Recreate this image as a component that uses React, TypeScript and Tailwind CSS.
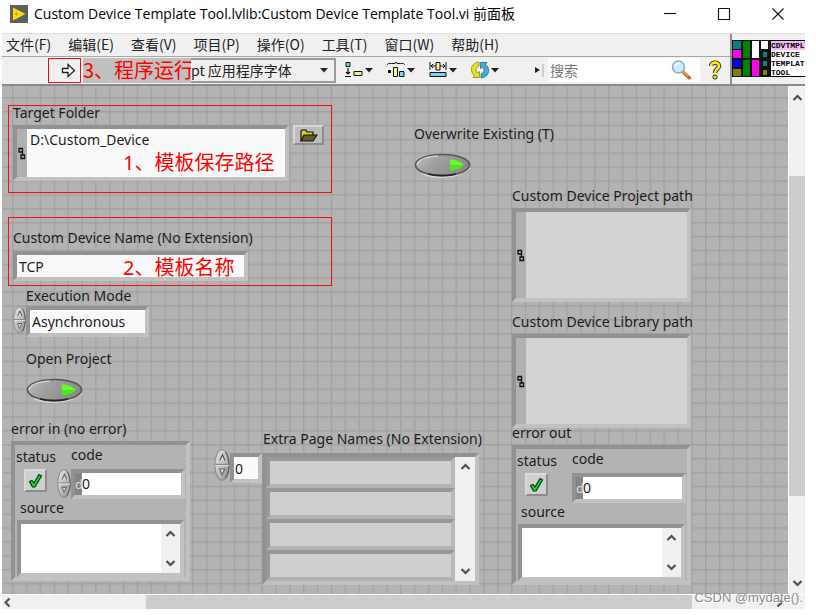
import type { ReactNode } from "react";

const LATIN = "font-['Noto_Sans','Noto_Sans_CJK_SC',sans-serif]";
const TITLE = "font-['Open_Sans','Noto_Sans_CJK_SC',sans-serif]";
const CJK = "font-['Noto_Sans_CJK_SC',sans-serif]";
const BEVEL =
  "border-4 border-t-[#929292] border-l-[#929292] border-r-[#c1c1c1] border-b-[#c1c1c1]";

const MENUS = ["文件(F)", "编辑(E)", "查看(V)", "项目(P)", "操作(O)", "工具(T)", "窗口(W)", "帮助(H)"];

function GridLines() {
  return (
    <svg className="absolute inset-0 size-full" aria-hidden="true">
      <defs>
        <pattern id="grid" x="10" y="11" width="13.86" height="13.88" patternUnits="userSpaceOnUse">
          <path d="M0.7 0V13.88M0 0.7H13.86" stroke="#a2a2a2" strokeWidth="1.4" />
        </pattern>
      </defs>
      <rect width="100%" height="100%" fill="url(#grid)" />
    </svg>
  );
}

function PathGlyph() {
  return (
    <svg width="8" height="13" viewBox="0 0 8 13" fill="none" stroke="#111" aria-hidden="true">
      <path d="M1 1.500H4.500V5H1ZM4.500 5V8M3 8H6.500V11.500H3Z" strokeWidth="1.300" />
    </svg>
  );
}

function Chevron({ dir }: { dir: "up" | "down" | "left" | "right" }) {
  const d = {
    up: "M1.500 8L5.500 4L9.500 8",
    down: "M1.500 3L5.500 7L9.500 3",
    left: "M7.500 1.500L3.500 5.500L7.500 9.500",
    right: "M3.500 1.500L7.500 5.500L3.500 9.500",
  }[dir];
  return (
    <svg width="11" height="11" viewBox="0 0 11 11" fill="none" aria-hidden="true">
      <path d={d} stroke="#505050" strokeWidth="2.200" />
    </svg>
  );
}

function Spinner({ label, size }: { label: string; size: string }) {
  return (
    <span className={`relative flex shrink-0 flex-col ${size}`}>
      <svg className="absolute inset-0 size-full" viewBox="0 0 14 28" preserveAspectRatio="none" aria-hidden="true">
        <defs>
          <linearGradient id="knob" x1="0" y1="0" x2="1" y2="1">
            <stop offset="0" stopColor="#e8e8e8" />
            <stop offset="0.6" stopColor="#b8b8b8" />
            <stop offset="1" stopColor="#888" />
          </linearGradient>
        </defs>
        <ellipse cx="7" cy="14" rx="6.300" ry="13.300" fill="url(#knob)" stroke="#8c8c8c" strokeWidth="1" />
        <path d="M10 2.500C14 8 14 20 10 25.500" fill="none" stroke="#666" strokeWidth="1.200" />
        <path d="M1 13.500H13" stroke="#888" />
        <path d="M1 14.500H13" stroke="#ddd" />
        <path d="M5 10L7.500 5L9.500 10" fill="#ddd" stroke="#555" strokeWidth="1" />
        <path d="M9.500 17.500L7 22.500L5 17.500Z" fill="#ddd" stroke="#666" strokeWidth="1" />
      </svg>
      <button type="button" aria-label={`${label} increment`} className="relative flex-1" />
      <button type="button" aria-label={`${label} decrement`} className="relative flex-1" />
    </span>
  );
}

function Toggle({ label }: { label: string }) {
  return (
    <label className="flex w-fit flex-col gap-[9px] leading-5 whitespace-nowrap">
      {label}
      <span className="relative block h-[25px] w-[58px]">
        <input type="checkbox" defaultChecked className="absolute inset-0 size-full opacity-0" />
        <svg width="58" height="25" viewBox="0 0 58 25" aria-hidden="true">
          <defs>
            <linearGradient id="oval" x1="0" y1="0" x2="1" y2="0.400">
              <stop offset="0" stopColor="#c4c4c4" />
              <stop offset="0.400" stopColor="#a2a2a2" />
              <stop offset="1" stopColor="#8a8a8a" />
            </linearGradient>
          </defs>
          <ellipse cx="29" cy="12.500" rx="28.500" ry="12" fill="#a6a6a6" />
          <path d="M8 20C20 26 44 26 56 15" fill="none" stroke="#d2d2d2" strokeWidth="2" />
          <ellipse cx="28.500" cy="12" rx="27" ry="10.500" fill="url(#oval)" stroke="#555" strokeWidth="1.600" />
          <path d="M3 12C4 5 14 3.500 24 3" fill="none" stroke="#e0e0e0" strokeWidth="1.200" />
          <path d="M14 21C22 23 34 23 42 21" fill="none" stroke="#222" strokeWidth="1.800" />
          <path d="M36 6.500C42 6.500 47 9 50 12C47 15 42 17.500 36 17.500Z" fill="#4be81c" />
          <path d="M36 6.500C42 6.500 47 9 50 12H36Z" fill="#62fb2c" />
        </svg>
      </span>
    </label>
  );
}

function PathIndicator({ label, id }: { label: string; id: string }) {
  return (
    <div className="flex flex-col">
      <label htmlFor={id} className="leading-5 whitespace-nowrap">
        {label}
      </label>
      <div className={`mt-0.5 flex h-[94px] w-[179px] bg-[#b0b0b0] ${BEVEL}`}>
        <span className="flex w-2.5 items-center justify-center">
          <PathGlyph />
        </span>
        <textarea id={id} readOnly className="min-w-0 flex-1 resize-none bg-[#d2d2d2] outline-none" />
      </div>
    </div>
  );
}

function ScrollColumn({ size, name }: { size: string; name: string }) {
  return (
    <span className={`flex shrink-0 flex-col items-center justify-between bg-[#f0f0f0] py-1 ${size}`}>
      <button type="button" aria-label={`${name} scroll up`}>
        <Chevron dir="up" />
      </button>
      <button type="button" aria-label={`${name} scroll down`}>
        <Chevron dir="down" />
      </button>
    </span>
  );
}

function ErrorCluster({ title, id, editable }: { title: string; id: string; editable?: boolean }) {
  return (
    <fieldset className="flex w-[179px] flex-col">
      <legend className="leading-5 whitespace-nowrap">{title}</legend>
      <div className={`mt-0.5 flex h-[140px] flex-col bg-[#b3b3b3] ${BEVEL}`}>
        <div className="flex">
          <label className="flex w-[42px] flex-col pl-px leading-5">
            <span className="pt-0.5">status</span>
            <span className="relative mt-0.5 ml-2 flex size-[23px] items-center justify-center border-2 border-t-[#dadada] border-r-[#8c8c8c] border-b-[#8c8c8c] border-l-[#dadada] bg-[#cfcfcf]">
              <input type="checkbox" defaultChecked className="absolute inset-0 size-full opacity-0" />
              <svg width="15" height="16" viewBox="0 0 15 16" aria-hidden="true">
                <path d="M1.500 8.500L4 7.500L6 10L11 1.500L13.500 3L7 14H4.500Z" fill="#0be32b" stroke="#113311" strokeWidth="1.200" />
              </svg>
            </span>
          </label>
          <div className="flex flex-1 flex-col">
            <label htmlFor={`${id}-code`} className="pl-3.5 leading-5">
              code
            </label>
            <div className="mt-1 flex h-[29px] items-center">
              {editable ? <Spinner label={`${title} code`} size="h-[29px] w-3.5" /> : <span className="w-3.5" />}
              <div className={`flex h-[30px] w-[114px] bg-[#858585] ${BEVEL}`}>
                <span className="w-[7px] overflow-hidden text-[13px] leading-[22px] text-[#dcdcdc]">d</span>
                <input
                  id={`${id}-code`}
                  defaultValue="0"
                  readOnly={!editable}
                  className="min-w-0 flex-1 bg-white outline-none"
                />
              </div>
            </div>
          </div>
        </div>
        <label htmlFor={`${id}-source`} className="pl-[5px] leading-5">
          source
        </label>
        <div className={`mt-0.5 ml-0.5 flex h-[58px] w-[167px] bg-white ${BEVEL}`}>
          <textarea id={`${id}-source`} readOnly={!editable} className="min-w-0 flex-1 resize-none outline-none" />
          <ScrollColumn name={`${title} source`} size="w-[19px]" />
        </div>
      </div>
    </fieldset>
  );
}

function DropMark() {
  return (
    <svg width="8" height="5" viewBox="0 0 8 5" aria-hidden="true">
      <path d="M0 0H8L4 4.500Z" fill="#222" />
    </svg>
  );
}

function ToolButton({ label, children }: { label: string; children: ReactNode }) {
  return (
    <button type="button" aria-label={label} className="flex items-center gap-0.5">
      <svg width="18" height="18" viewBox="0 0 18 18" fill="none" aria-hidden="true">
        {children}
      </svg>
      <DropMark />
    </button>
  );
}

function TitleBar() {
  return (
    <header className="flex h-[33px] items-start bg-white pl-2">
      <div className="flex h-[27px] flex-1 items-center gap-1.5">
        <svg width="18" height="18" viewBox="0 0 18 18" aria-hidden="true">
          <rect width="18" height="18" fill="#5b5f66" />
          <path d="M3 2.500L15.500 9L3 15.500Z" fill="#fddb00" />
          <path d="M5 9H8M6.500 7.500V10.500" stroke="#b89a00" />
        </svg>
        <h1 className={`text-sm whitespace-nowrap text-black ${TITLE}`}>
          Custom Device Template Tool.lvlib:Custom Device Template Tool.vi 前面板
        </h1>
      </div>
      {[
        ["Minimize", "M1 6.500H13"],
        ["Maximize", "M1.500 1.500H12.500V12.500H1.500Z"],
        ["Close", "M1.500 1.500L12.500 12.500M12.500 1.500L1.500 12.500"],
      ].map(([name, d]) => (
        <button key={name} type="button" aria-label={name} className="flex h-[27px] w-[54px] items-center justify-center">
          <svg width="14" height="14" viewBox="0 0 14 14" fill="none" aria-hidden="true">
            <path d={d} stroke="#111" strokeWidth="1.100" />
          </svg>
        </button>
      ))}
    </header>
  );
}

function Toolbar() {
  return (
    <div className="flex h-7 items-center">
      <button
        type="button"
        aria-label="Run"
        className="ml-[46px] flex h-[25px] w-[33px] items-center justify-end border border-[#f01010] pr-1"
      >
        <svg width="15" height="15" viewBox="0 0 15 15" aria-hidden="true">
          <path d="M1.500 5.500H7V1.500L13.500 7.500L7 13.500V9.500H1.500Z" fill="#fff" stroke="#222" strokeWidth="1.300" />
        </svg>
      </button>
      <span className="ml-0.5 flex h-[25px] w-[108px] items-center bg-[#c0c0c0] text-xl leading-6 whitespace-nowrap text-[#f00]">
        3、程序运行
      </span>
      <span className="relative flex w-[145px] items-center">
        <select
          aria-label="应用程序字体"
          className="h-[25px] w-full appearance-none border-2 border-l-0 border-[#9a9a9a] bg-[#f0f0f0] text-sm text-[#222] outline-none"
        >
          <option>pt 应用程序字体</option>
        </select>
        <span className="pointer-events-none absolute right-2">
          <DropMark />
        </span>
      </span>
      <div className="ml-[9px] flex items-center gap-3.5">
        <ToolButton label="Align Objects">
          <path d="M1 1.500H5V5.500H1Z" fill="#6fd6f5" stroke="#111" />
          <path d="M3 7V13M1 11L3 13L5 11M0 15.500H6" stroke="#111" strokeWidth="1.200" />
          <path d="M9 10.500H17V14.500H9Z" fill="#f7f27c" stroke="#111" />
        </ToolButton>
        <ToolButton label="Distribute Objects">
          <path d="M0 4C1 2 2 2.500 8 2.500L9 1L10 2.500C16 2.500 17 2 18 4" stroke="#111" />
          <path d="M1 9H4V12H1Z" fill="#111" />
          <path d="M6.500 6.500H10.500V15.500H6.500Z" fill="#f7f27c" stroke="#111" />
          <path d="M12.500 10.500H17V15.500H12.500Z" fill="#6fd6f5" stroke="#111" />
        </ToolButton>
        <ToolButton label="Resize Objects">
          <path d="M1 1V9M17 1V9M2 5H7M11 5H16M4 3L2 5L4 7M14 3L16 5L14 7" stroke="#111" />
          <path d="M7 1.500H11V9H7Z" fill="#f7f27c" stroke="#111" />
          <path d="M1 11.500H17V15.500H1Z" fill="#6fd6f5" stroke="#111" />
        </ToolButton>
        <ToolButton label="Reorder">
          <path d="M8 1C3 1.500 0 5 0.500 9C0.800 12 2 13.500 3.500 14.500L2 16.500H8.500V10.500L6.500 12C4 9.500 4.500 6 8 5Z" fill="#e8de2a" stroke="#8d8514" strokeWidth="0.800" />
          <path d="M10 17C15 16.500 18 13 17.500 9C17.200 6 16 4.500 14.500 3.500L16 1.500H9.500V7.500L11.500 6C14 8.500 13.500 12 10 13Z" fill="#45acd0" stroke="#1c6b88" strokeWidth="0.800" />
        </ToolButton>
      </div>
      <svg className="ml-auto" width="9" height="16" viewBox="0 0 9 16" aria-hidden="true">
        <path d="M0 5L5 8L0 11Z" fill="#222" />
        <path d="M8 2V15" stroke="#aaa" />
      </svg>
      <label className="ml-1 flex h-6 w-[152px] items-center bg-white pr-2 pl-0.5">
        <input aria-label="搜索" placeholder="搜索" className="min-w-0 flex-1 text-sm placeholder:text-[#777] outline-none" />
        <svg width="21" height="20" viewBox="0 0 21 20" aria-hidden="true">
          <path d="M12 12L18.500 18" stroke="#c8691e" strokeWidth="3.200" strokeLinecap="round" />
          <path d="M12 11.500L17 16" stroke="#f3b04a" strokeWidth="1.200" />
          <circle cx="7.500" cy="7" r="6" fill="#cfeafc" stroke="#8fa9cf" strokeWidth="1.600" />
          <path d="M4 6C5 3.500 7 3 9 3.500" fill="none" stroke="#fff" strokeWidth="1.500" />
        </svg>
      </label>
      <button type="button" aria-label="Help" className="mr-2 ml-2">
        <svg width="14" height="20" viewBox="0 0 14 20" fill="none" aria-hidden="true">
          <path d="M3 6C3 1.500 11 1.500 11 6C11 9 7 9 7 13" stroke="#333" strokeWidth="4.500" />
          <circle cx="7" cy="17" r="2.500" fill="#333" />
          <path d="M3 6C3 1.500 11 1.500 11 6C11 9 7 9 7 13" stroke="#f8ee10" strokeWidth="2.600" />
          <circle cx="7" cy="17" r="1.600" fill="#f8ee10" />
        </svg>
      </button>
    </div>
  );
}

function ViIcon() {
  return (
    <div className="flex w-[75px] shrink-0 items-center overflow-hidden border-l-2 border-[#8e8e8e] pb-2 pt-1.5">
      <svg className="shrink-0" width="38" height="37" viewBox="0 0 38 37" aria-hidden="true">
        <rect width="38" height="37" fill="#111" />
        <path d="M1 1H9V9H1Z" fill="#087f80" />
        <path d="M1 10H9V18H1Z" fill="#ff00f0" />
        <path d="M1 20H9V27H1Z" fill="#0000f8" />
        <path d="M1 29H9V36H1Z" fill="#808000" />
        <path d="M11 1H18V18H11ZM11 20H18V36H11Z" fill="#008000" />
        <path d="M20 1H27V18H20ZM29 1H36V9H29Z" fill="#fff" />
        <path d="M20 20H27V36H20Z" fill="#ff00f0" />
        <path d="M31 12H35V17H31ZM31 21H35V26H31Z" fill="#087f80" />
        <path d="M31 30H35V35H31Z" fill="#808000" />
      </svg>
      <div className="h-[37px] w-9 shrink-0 overflow-hidden border border-r-0 border-black bg-white text-[8px] leading-[9px] font-bold whitespace-nowrap text-black font-['Liberation_Mono',monospace]">
        <p className="bg-[#f4b8f4]">CDVTMPL</p>
        <p>DEVICE</p>
        <p>TEMPLAT</p>
        <p>TOOL</p>
      </div>
    </div>
  );
}

function LeftControls() {
  return (
    <div className="flex w-[324px] shrink-0 flex-col">
      <section className="relative h-[88px] border border-[#f01010] pl-1">
        <label htmlFor="target" className="block leading-[14px]">
          Target Folder
        </label>
        <div className="mt-[5px] flex items-start gap-1">
          <div className={`flex h-[56px] w-[276px] bg-[#b0b0b0] ${BEVEL}`}>
            <span className="flex w-2.5 items-center justify-center">
              <PathGlyph />
            </span>
            <textarea
              id="target"
              defaultValue="D:\Custom_Device"
              className="min-w-0 flex-1 resize-none bg-[#fafafa] pl-[3px] leading-[22px] outline-none"
            />
          </div>
          <button
            type="button"
            aria-label="Browse"
            className="flex h-5 w-[31px] items-center justify-center border-2 border-t-[#d8d8d8] border-r-[#8c8c8c] border-b-[#8c8c8c] border-l-[#d8d8d8] bg-[#bdbdbd]"
          >
            <svg width="18" height="13" viewBox="0 0 18 13" aria-hidden="true">
              <path d="M1 12V2L2 1H6L7 3H13V6" fill="#d8d012" stroke="#111" strokeWidth="1.200" />
              <path d="M1 12L4 6H17L13 12Z" fill="#5e5b2c" stroke="#111" strokeWidth="1.200" />
            </svg>
          </button>
        </div>
        <span className="pointer-events-none absolute top-[45px] left-[114px] text-xl leading-6 text-[#f00]">
          1、模板保存路径
        </span>
      </section>
      <section className="relative mt-6 h-[69px] border border-[#f01010] pt-2.5 pl-1">
        <label htmlFor="device-name" className="block leading-5">
          Custom Device Name (No Extension)
        </label>
        <input
          id="device-name"
          defaultValue="TCP"
          className={`mt-[3px] h-[30px] w-[235px] bg-[#fafafa] pl-0.5 outline-none ${BEVEL}`}
        />
        <span className="pointer-events-none absolute top-[38px] left-[114px] text-xl leading-6 text-[#f00]">
          2、模板名称
        </span>
      </section>
      <div className="flex flex-col pl-[5px]">
        <label htmlFor="mode" className="pl-[13px] leading-5">
          Execution Mode
        </label>
        <div className="flex items-start">
          <Spinner label="Execution Mode" size="h-7 w-[13px]" />
          <select
            id="mode"
            className={`h-[31px] w-[123px] appearance-none bg-[#fafafa] pl-0.5 outline-none ${BEVEL}`}
          >
            <option>Asynchronous</option>
          </select>
        </div>
        <div className="mt-3 pl-[13px]">
          <Toggle label="Open Project" />
        </div>
      </div>
    </div>
  );
}

function PageNames() {
  return (
    <div className="flex flex-col pt-2.5">
      <label htmlFor="page-0" className="pl-[49px] leading-5 whitespace-nowrap">
        Extra Page Names (No Extension)
      </label>
      <div className="mt-1 flex items-start">
        <Spinner label="Page index" size="-mt-1 h-8 w-4" />
        <input
          aria-label="Page index"
          defaultValue="0"
          className={`h-[30px] w-8 bg-[#fafafa] pl-px outline-none ${BEVEL}`}
        />
        <div className={`flex h-[132px] w-[217px] bg-[#b3b3b3] ${BEVEL}`}>
          <div className="flex flex-1 flex-col justify-between">
            {[0, 1, 2, 3].map((n) => (
              <input
                key={n}
                id={`page-${n}`}
                aria-label={`Page name ${n}`}
                className="h-[31px] w-full border-4 border-t-[#989898] border-r-[#b9b9b9] border-b-[#b3b3b3] border-l-[#989898] bg-[#cfcfcf] outline-none"
              />
            ))}
          </div>
          <ScrollColumn name="Page names" size="w-5" />
        </div>
      </div>
    </div>
  );
}

export default function App() {
  return (
    <div className={`flex min-h-screen flex-col bg-white pr-[11px] pb-1.5 pl-0.5 ${CJK}`}>
      <TitleBar />
      <div className="flex h-[53px] border-t border-b-2 border-t-[#dedede] border-b-[#8a8a8a] bg-[#f0f0f0]">
        <div className="flex min-w-0 flex-1 flex-col">
          <nav className="flex h-[23px] gap-[17px] border-b border-[#a8a8a8] pl-1 text-sm leading-5 text-[#222]">
            {MENUS.map((m) => (
              <button key={m} type="button" className="h-5 whitespace-nowrap">
                {m}
              </button>
            ))}
          </nav>
          <Toolbar />
        </div>
        <ViIcon />
      </div>
      <div className="flex flex-1">
        <main className={`relative min-w-0 flex-1 overflow-hidden bg-[#b3b3b3] text-sm text-[#1c1c1c] ${LATIN}`}>
          <GridLines />
          <div className="relative flex">
            <div className="flex w-[510px] shrink-0 flex-col pt-[19px] pl-1.5">
              <div className="flex">
                <LeftControls />
                <div className="pt-[19px] pl-[82px]">
                  <Toggle label="Overwrite Existing (T)" />
                </div>
              </div>
              <div className="flex items-start gap-6 pt-4 pl-[3px]">
                <ErrorCluster title="error in (no error)" id="error-in" editable />
                <PageNames />
              </div>
            </div>
            <div className="flex flex-col pt-[100px]">
              <PathIndicator label="Custom Device Project path" id="project-path" />
              <div className="h-2.5" />
              <PathIndicator label="Custom Device Library path" id="library-path" />
              <div className="-mt-[5px]">
                <ErrorCluster title="error out" id="error-out" />
              </div>
            </div>
          </div>
        </main>
        <div className="flex w-[17px] shrink-0 flex-col items-center border-l border-white bg-[#f0f0f0]">
          <button type="button" aria-label="Scroll up" className="flex h-[22px] items-center">
            <Chevron dir="up" />
          </button>
          <div className="h-[68px]" />
          <div className="w-full flex-1 bg-[#cdcdcd]" />
          <div className="h-[76px]" />
          <button type="button" aria-label="Scroll down" className="flex h-[22px] items-center">
            <Chevron dir="down" />
          </button>
        </div>
      </div>
      <div className="relative flex h-[15px] items-center border-t border-white bg-[#f0f0f0]">
        <button type="button" aria-label="Scroll left">
          <Chevron dir="left" />
        </button>
        <div className="ml-[133px] h-full flex-1 bg-[#cdcdcd]" />
        <div className="flex w-[113px] justify-end pr-5">
          <button type="button" aria-label="Scroll right">
            <Chevron dir="right" />
          </button>
        </div>
        <span className="absolute right-0.5 bottom-0 text-[13px] leading-[22px] text-[#8c8c8c] font-['Liberation_Sans',sans-serif] [text-shadow:1px_1px_0_#fff]">
          CSDN @mydate().
        </span>
      </div>
    </div>
  );
}
